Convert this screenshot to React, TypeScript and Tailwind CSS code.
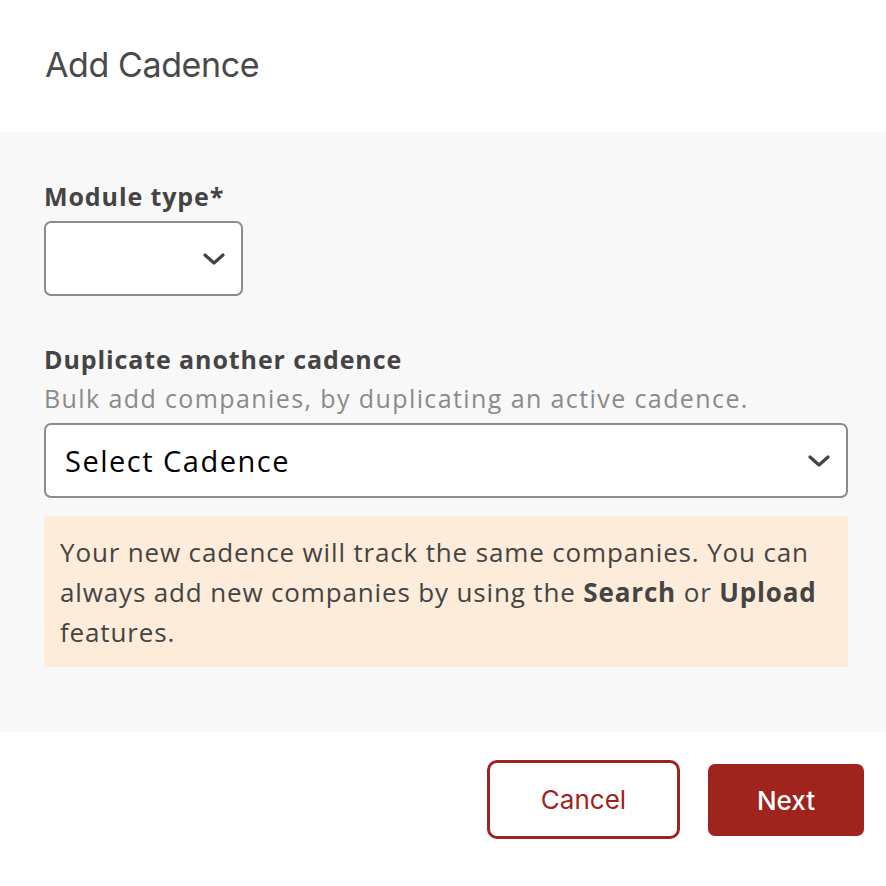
const Chevron = () => (
  <svg width="22" height="12" viewBox="0 0 22 12" fill="none" className="shrink-0">
    <path d="M2 2l9 8 9-8" stroke="#444" strokeWidth="3.2" strokeLinecap="round" strokeLinejoin="round" />
  </svg>
);

export default function App() {
  return (
    <div className="flex h-[886px] w-[886px] flex-col bg-white font-['Inter',sans-serif]">
      <header className="flex h-[132px] items-center px-[45px] pb-[4px]">
        <h1 className="text-[34px] font-normal tracking-[-0.4px] text-[#4a4a4a]">Add Cadence</h1>
      </header>

      <main className="flex h-[600px] flex-col bg-[#f8f8f8] px-[44px] pt-[49px] font-['Open_Sans',sans-serif]">
        <label className="text-[25px] leading-[30px] font-bold tracking-[0.9px] text-[#444]">Module type*</label>
        <div className="mt-[10px] flex h-[75px] w-[199px] items-center justify-end rounded-[7px] border-2 border-[#8c8c8c] bg-white pr-[16px]">
          <Chevron />
        </div>

        <label className="mt-[48px] text-[25px] leading-[30px] font-bold tracking-[0.9px] text-[#444]">
          Duplicate another cadence
        </label>
        <p className="mt-[9px] text-[25px] leading-[30px] tracking-[1.4px] text-[#8a8a8a]">
          Bulk add companies, by duplicating an active cadence.
        </p>
        <div className="mt-[10px] flex h-[75px] w-[804px] items-center justify-between rounded-[7px] border-2 border-[#8c8c8c] bg-white pl-[19px] pr-[16px]">
          <span className="text-[29px] tracking-[1.5px] text-black">Select Cadence</span>
          <Chevron />
        </div>

        <div className="mt-[18px] w-[804px] bg-[#fcecd9] px-[16px] pt-[16px] pb-[15px] text-[26px] leading-[40px] tracking-[0.85px] text-[#444]">
          Your new cadence will track the same companies. You can always add new companies by using the{" "}
          <b className="font-bold">Search</b> or <b className="font-bold">Upload</b> features.
        </div>
      </main>

      <footer className="flex items-start justify-end gap-[28px] pt-[28px] pr-[22px]">
        <button className="flex h-[79px] w-[193px] items-center justify-center rounded-[10px] border-[3px] border-[#a0241e] bg-white text-[26px] text-[#a0241e]">
          Cancel
        </button>
        <button className="mt-[4px] flex h-[72px] w-[156px] items-center justify-center rounded-[7px] bg-[#a0241e] text-[26px] font-medium text-white">
          Next
        </button>
      </footer>
    </div>
  );
}
